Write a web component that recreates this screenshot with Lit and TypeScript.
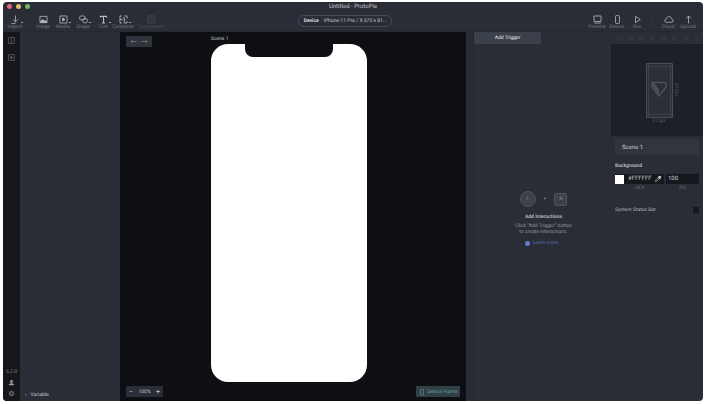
import { LitElement, html, css, svg } from "lit";
import { customElement, property, state } from "lit/decorators.js";

const ICONS: Record<string, unknown> = {
  import: svg`<path d="M7 2v8M4 7l3 3 3-3M2 12h5"/>`,
  image: svg`<rect x="2.5" y="3" width="9" height="8"/><path d="M3 10l3-3 2 2 1-1 2 2.5H3z" fill="currentColor"/>`,
  media: svg`<rect x="2.5" y="2.5" width="9" height="9"/><path d="M6 5l3 2-3 2z" fill="currentColor"/>`,
  shape: svg`<rect x="2" y="2.5" width="7" height="5" rx="2"/><circle cx="9" cy="8.5" r="3"/>`,
  text: svg`<path d="M3 4.5V3h8v1.5M7 3v8.500M5 11.500h4" stroke-width="1.4"/>`,
  container: svg`<path d="M5 2.5H2.5v9H5M2.5 7H6M8 2.5h3.5V6M8 4.5v7h3.5V9M6 4l3 3"/>`,
  component: svg`<rect x="2.5" y="2.5" width="9" height="9"/><path d="M7 4.5L9.5 7 7 9.5 4.5 7z"/>`,
  preview: svg`<rect x="2.500" y="2.5" width="9" height="7"/><path d="M3 11.5h8"/>`,
  device: svg`<rect x="4.5" y="2" width="5" height="10" rx="1"/>`,
  run: svg`<path d="M4.5 3l6 4-6 4z"/>`,
  cloud: svg`<path d="M4 10.5h6.5a2 2 0 0 0 .5-4C10.5 2.500 5.500 2 4.500 6 1.500 6.500 1.800 10.500 4 10.500z"/>`,
  upload: svg`<path d="M7 12V2.5M4 5.5l3-3 3 3"/>`,
  layers: svg`<rect x="2.5" y="2.5" width="9" height="9"/><path d="M7 2.5v9"/>`,
  back: svg`<path d="M12 7H3M5.5 4.500L3 7l2.500 2.500"/>`,
  forward: svg`<path d="M2 7h9M8.5 4.500L11 7 8.500 9.500"/>`,
  user: svg`<circle cx="7" cy="5" r="2.5" fill="currentColor"/><path d="M2 12c0-4 10-4 10 0z" fill="currentColor"/>`,
  gear: svg`<circle cx="7" cy="7" r="3.5" stroke-width="2"/><path d="M7 1v2M7 11v2M1 7h2M11 7h2M3 3l1 1M10 10l1 1M3 11l1-1M10 4l1-1"/>`,
  picker: svg`<path d="M2.5 11.5l1-3 4-4 2 2-4 4z"/><path d="M7 3l4 4M8.5 4.5l2-2a.7.7 0 0 1 1 1l-2 2z" stroke-width="2"/>`,
  hexagon: svg`<path d="M7 2l4.5 2.500v5L7 12l-4.500-2.500v-5z"/>`,
  alignLeft: svg`<path d="M3 2v10M5 5h6v4H5z"/>`,
  alignCenter: svg`<path d="M7 2v10M4 5h6v4H4z"/>`,
  alignRight: svg`<path d="M11 2v10M3 5h6v4H3z"/>`,
  alignTop: svg`<path d="M2 3h10M5 5h4v6H5z"/>`,
  alignMiddle: svg`<path d="M2 7h10M5 4h4v6H5z"/>`,
  alignBottom: svg`<path d="M2 11h10M5 3h4v6H5z"/>`,
};

@customElement("pie-icon")
class PieIcon extends LitElement {
  @property() name = "";
  static styles = css`
    :host { display: block; width: 11px; height: 11px; flex: none; }
    svg { display: block; width: 100%; height: 100%; fill: none; stroke: currentColor; stroke-linejoin: round; }
  `;
  render() {
    return html`<svg viewBox="0 0 14 14" aria-hidden="true">${ICONS[this.name]}</svg>`;
  }
}

@customElement("tool-button")
class ToolButton extends LitElement {
  @property() icon = "";
  @property() label = "";
  @property({ type: Boolean }) menu = false;
  @property({ type: Boolean, reflect: true }) disabled = false;
  static styles = css`
    :host { display: block; flex: none; width: 20px; }
    button {
      display: flex; flex-direction: column; align-items: center; width: 100%; padding: 0;
      border: 0; background: none; color: #b9bcc3; font: inherit; text-rendering: inherit;
    }
    .label { margin-top: -1px; font-size: 5px; line-height: 6px; color: #737780; white-space: nowrap; }
    .glyph { position: relative; }
    .menu::after {
      content: ""; position: absolute; right: -2px; bottom: 2px; width: 2px; height: 1px; background: #a0a3aa;
    }
    :host([disabled]) button, :host([disabled]) .label { color: #4a4e57; }
  `;
  render() {
    return html`<button ?disabled=${this.disabled}>
      <span class="glyph ${this.menu ? "menu" : ""}"><pie-icon name=${this.icon}></pie-icon></span>
      <span class="label">${this.label}</span>
    </button>`;
  }
}

@customElement("app-root")
class AppRoot extends LitElement {
  @state() zoom = 100;

  static styles = css`
    :host {
      display: block; box-sizing: border-box; height: 100vh; padding: 2px 3px 3px; background: #fff;
      font-family: Roboto, "Liberation Sans", sans-serif; font-size: 5px; line-height: 8px; color: #c8cbd0;
      text-rendering: geometricPrecision;
    }
    * { box-sizing: border-box; }
    button, input { font: inherit; color: inherit; text-rendering: inherit; border: 0; padding: 0; margin: 0; background: none; }
    .window { display: flex; flex-direction: column; height: 100%; border-radius: 4px; overflow: hidden; background: #2a2d35; }
    header { height: 30px; flex: none; display: flex; flex-direction: column; justify-content: space-between; border-bottom: 1px solid #25282f; }
    .title { display: grid; grid-template-columns: 1fr auto 1fr; height: 9px; }
    .lights { display: flex; gap: 4px; padding: 2px 4px; }
    .light { width: 5px; height: 5px; border-radius: 50%; }
    .red { background: #e2687a; }
    .yellow { background: #dfbd6c; }
    .green { background: #76b565; }
    .bar { display: grid; grid-template-columns: minmax(0, 19fr) 94px minmax(0, 20fr); align-items: end; padding-bottom: 1px; }
    .tools { display: flex; padding: 0 2px; }
    .tools .gap { margin-left: 8px; }
    .tools.end { justify-content: flex-end; padding-right: 5px; }
    .tools .rule { width: 1px; height: 12px; margin: 0 5px; background: #31343d; }
    h1 { margin: 0; font-size: 6px; line-height: 9px; font-weight: 400; color: #c5c7cc; white-space: nowrap; }
    .device { display: flex; gap: 5px; align-items: center; justify-content: center; height: 12px; margin-bottom: 3px; border: 1px solid #474b54; border-radius: 6px; white-space: nowrap; }
    .device b { font-weight: 700; color: #dadce0; }
    main { flex: 1; min-height: 0; display: grid; grid-template-columns: 17px 100px minmax(0, 1fr) 8px 137px 92px; }
    .rail { display: flex; flex-direction: column; align-items: center; gap: 8px; padding: 4px 0; background: #15171b; color: #696d75; }
    .rail pie-icon { width: 9px; height: 9px; }
    .rail .version { line-height: 6px; color: #8a8d94; }
    .rail .foot { display: flex; flex-direction: column; align-items: center; gap: 4px; margin-top: auto; }
    .rail .foot pie-icon { width: 7px; height: 7px; color: #9699a0; }
    .panel { display: flex; flex-direction: column; justify-content: flex-end; padding: 2px 5px; }
    .variable { display: flex; gap: 4px; align-items: center; }
    .canvas { display: grid; grid-template-columns: minmax(0, 10fr) 156px minmax(0, 11fr); background: #0d0f13; padding: 4px 6px; }
    .side { display: flex; flex-direction: column; justify-content: space-between; align-items: flex-start; }
    .side.end { align-items: flex-end; justify-content: flex-end; }
    .chip { display: flex; align-items: center; justify-content: space-between; height: 11px; background: #30333b; border-radius: 1px; }
    .history { width: 26px; padding: 0 3px; color: #83868e; }
    .history pie-icon { width: 9px; height: 9px; }
    .zoom { width: 37px; padding: 0 3px; background: #2b2e36; }
    .zoom button { font-size: 7px; }
    .frame { justify-content: center; gap: 1px; width: 44px; background: #304047; color: #719d9b; white-space: nowrap; }
    .frame pie-icon { width: 8px; height: 8px; }
    .scene-name { line-height: 6px; }
    .phone { display: flex; justify-content: center; height: 338px; margin-top: 2px; background: #fff; border-radius: 17px; overflow: hidden; }
    .notch { width: 88px; height: 13px; background: #0d0f13; border-radius: 0 0 8px 8px; }
    .gutter { border-right: 1px solid #23262d; }
    .interactions { display: flex; flex-direction: column; }
    .trigger { width: 67px; height: 12px; background: #3c404b; border-radius: 1px; color: #e6e8eb; }
    .empty { flex: 1; display: flex; flex-direction: column; align-items: center; padding: 147px 0 0 2px; text-align: center; color: #91949c; line-height: 6px; }
    .pair { display: flex; align-items: center; gap: 8px; margin-bottom: 6px; }
    .node { display: grid; place-items: center; width: 16px; height: 16px; border: 1px solid #50545d; background: #3d4149; border-radius: 50%; color: #868a92; }
    .node.square { width: 13px; height: 13px; border-radius: 2px; }
    h2 { margin: 0 0 2px; font-size: 5px; line-height: 8px; font-weight: 700; color: #b0b3b9; }
    .empty p { margin: 0; }
    .empty a { display: flex; align-items: center; gap: 3px; margin-top: 5px; color: #5b6fb5; text-decoration: none; }
    .dot { width: 5px; height: 5px; border-radius: 50%; background: #657bcb; }
    .align { display: flex; justify-content: flex-end; align-items: center; height: 12px; gap: 4px; padding-right: 3px; color: #3f434c; }
    .align pie-icon { width: 7px; height: 7px; }
    .preview { display: grid; grid-template-columns: 1fr 27px 1fr; grid-template-rows: 55px 6px; align-content: center; height: 92px; padding: 6px 0 0 4px; background: #1d2027; color: #545861; line-height: 6px; }
    .preview svg { grid-column: 2; width: 27px; height: 55px; }
    .preview .tall { writing-mode: vertical-rl; align-self: center; justify-self: start; }
    .preview .wide { grid-column: 2; text-align: center; }
    .props { display: flex; flex-direction: column; padding: 3px 4px; }
    .name { width: 100%; height: 16px; padding: 0 7px; background: #32353e; font-size: 6px; border-radius: 1px; }
    h3 { margin: 7px 0 4px; font-size: 5px; line-height: 8px; font-weight: 700; color: #b5b8be; }
    .fill { display: grid; grid-template-columns: 49px minmax(0, 1fr); gap: 0 2px; }
    .field { display: flex; align-items: center; gap: 2px; height: 10px; background: #15181d; color: #cfd1d5; font-size: 6px; }
    .field input { flex: 1; min-width: 0; width: 0; padding-left: 2px; }
    .swatch { width: 9px; height: 9px; background: #fff; }
    .field pie-icon { width: 8px; height: 8px; margin-right: 2px; }
    .fill label { text-align: center; line-height: 8px; color: #666a72; }
    .status { display: flex; align-items: center; justify-content: space-between; margin-top: 7px; padding-top: 6px; border-top: 1px solid #262930; color: #b3b6bc; }
    .status input { appearance: none; width: 6px; height: 6px; background: #14171c; border-radius: 1px; }
  `;

  render() {
    return html`<div class="window">
      <header>
        <div class="title">
          <div class="lights"><i class="light red"></i><i class="light yellow"></i><i class="light green"></i></div>
          <h1>Untitled - ProtoPie</h1>
        </div>
        <div class="bar">
          <div class="tools">
            <tool-button icon="import" label="Import" menu></tool-button>
            <tool-button class="gap" icon="image" label="Image"></tool-button>
            <tool-button icon="media" label="Media" menu></tool-button>
            <tool-button icon="shape" label="Shape" menu></tool-button>
            <tool-button icon="text" label="Text" menu></tool-button>
            <tool-button icon="container" label="Container" menu></tool-button>
            <tool-button class="gap" icon="component" label="Component" disabled></tool-button>
          </div>
          <button class="device"><b>Device</b><span>iPhone 11 Pro / X 375 x 81...</span></button>
          <div class="tools end">
            <tool-button icon="preview" label="Preview"></tool-button>
            <tool-button icon="device" label="Device"></tool-button>
            <tool-button icon="run" label="Run"></tool-button>
            <i class="rule"></i>
            <tool-button icon="cloud" label="Cloud"></tool-button>
            <tool-button icon="upload" label="Upload"></tool-button>
          </div>
        </div>
      </header>
      <main>
        <nav class="rail">
          <button aria-label="Layers"><pie-icon name="layers"></pie-icon></button>
          <button aria-label="Components"><pie-icon name="media"></pie-icon></button>
          <div class="foot">
            <span class="version">5.2.0</span>
            <button aria-label="Account"><pie-icon name="user"></pie-icon></button>
            <button aria-label="Settings"><pie-icon name="gear"></pie-icon></button>
          </div>
        </nav>
        <aside class="panel"><button class="variable"><span>›</span>Variable</button></aside>
        <section class="canvas">
          <div class="side">
            <div class="chip history">
              <button aria-label="Back"><pie-icon name="back"></pie-icon></button>
              <button aria-label="Forward"><pie-icon name="forward"></pie-icon></button>
            </div>
            <div class="chip zoom">
              <button aria-label="Zoom out" @click=${() => (this.zoom -= 10)}>−</button>
              <span>${this.zoom}%</span>
              <button aria-label="Zoom in" @click=${() => (this.zoom += 10)}>+</button>
            </div>
          </div>
          <div>
            <div class="scene-name">Scene 1</div>
            <div class="phone"><div class="notch"></div></div>
          </div>
          <div class="side end"><button class="chip frame"><pie-icon name="device"></pie-icon>Device Frame</button></div>
        </section>
        <div class="gutter"></div>
        <section class="interactions">
          <button class="trigger">Add Trigger</button>
          <div class="empty">
            <div class="pair"><span class="node">T</span><span>+</span><span class="node square">R</span></div>
            <h2>Add Interactions</h2>
            <p>Click “Add Trigger” button<br />to create interactions.</p>
            <a href="#learn"><i class="dot"></i>Learn more...</a>
          </div>
        </section>
        <aside>
          <div class="align">
            ${["hexagon", "component", "alignLeft", "alignCenter", "alignRight", "alignTop", "alignMiddle", "alignBottom"].map(
              (name) => html`<pie-icon name=${name}></pie-icon>`
            )}
          </div>
          <div class="preview">
            <svg viewBox="0 0 27 55" fill="none" stroke="#4b4f58">
              <path d="M.5.5h26v54H.5z" fill="#2c2f37" />
              <path d="M2.5.5v54M24.5.5v54M.5 3.5h26M.5 51.5h26" stroke="#3b3f48" />
              <path d="M5 20l8 14V26l-5-6z" fill="#4b4f58" stroke="none" />
              <path d="M6 19.5h14v4.5l-7 9-7-9z" stroke-width="1.5" />
            </svg>
            <span class="tall">812px</span>
            <span class="wide">375px</span>
          </div>
          <div class="props">
            <input class="name" aria-label="Scene name" value="Scene 1" />
            <h3>Background</h3>
            <div class="fill">
              <div class="field"><i class="swatch"></i><input id="hex" value="#FFFFFF" /><pie-icon name="picker"></pie-icon></div>
              <div class="field"><input id="fill" value="100" /></div>
              <label for="hex">HEX</label>
              <label for="fill">Fill</label>
            </div>
            <div class="status"><label for="bar">System Status Bar</label><input id="bar" type="checkbox" /></div>
          </div>
        </aside>
      </main>
    </div>`;
  }
}
